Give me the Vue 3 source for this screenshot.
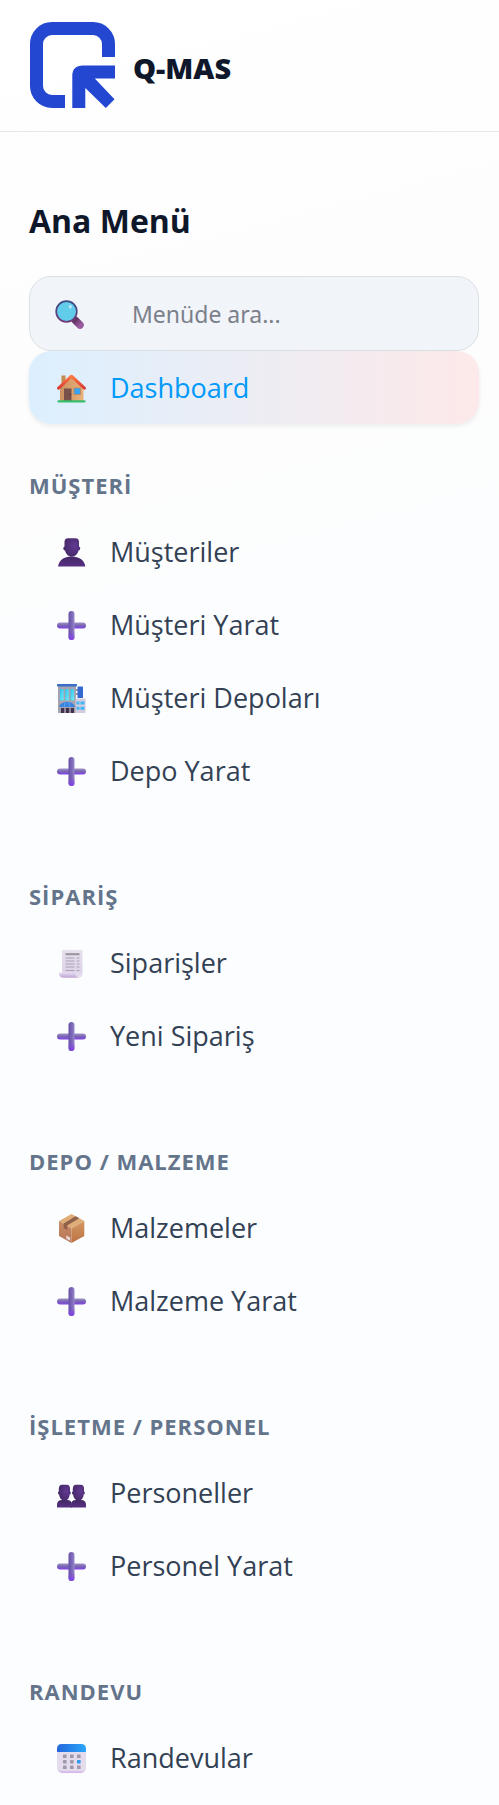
<script setup>
import { ref } from 'vue'

const query = ref('')

const sections = [
  {
    title: 'MÜŞTERİ',
    items: [
      { icon: 'person', label: 'Müşteriler' },
      { icon: 'plus', label: 'Müşteri Yarat' },
      { icon: 'building', label: 'Müşteri Depoları' },
      { icon: 'plus', label: 'Depo Yarat' },
    ],
  },
  {
    title: 'SİPARİŞ',
    items: [
      { icon: 'receipt', label: 'Siparişler' },
      { icon: 'plus', label: 'Yeni Sipariş' },
    ],
  },
  {
    title: 'DEPO / MALZEME',
    items: [
      { icon: 'box', label: 'Malzemeler' },
      { icon: 'plus', label: 'Malzeme Yarat' },
    ],
  },
  {
    title: 'İŞLETME / PERSONEL',
    items: [
      { icon: 'people', label: 'Personeller' },
      { icon: 'plus', label: 'Personel Yarat' },
    ],
  },
  {
    title: 'RANDEVU',
    items: [{ icon: 'calendar', label: 'Randevular' }],
  },
]
</script>

<template>
  <div class="page">
    <svg class="defs" width="0" height="0" aria-hidden="true">
      <defs>
        <linearGradient id="gPlusV" x1="0" y1="0" x2="1" y2="0">
          <stop offset="0" stop-color="#6650a8" />
          <stop offset="0.6" stop-color="#7d6bb8" />
          <stop offset="1" stop-color="#9a88cc" />
        </linearGradient>
        <linearGradient id="gPlusH" x1="0" y1="0" x2="0" y2="1">
          <stop offset="0" stop-color="#a093c4" />
          <stop offset="0.5" stop-color="#7965b4" />
          <stop offset="1" stop-color="#8141e6" />
        </linearGradient>
        <linearGradient id="gPlusEnd" x1="0" y1="0" x2="0" y2="1">
          <stop offset="0.7" stop-color="#8141e6" stop-opacity="0" />
          <stop offset="1" stop-color="#8141e6" />
        </linearGradient>
        <radialGradient id="gHead" cx="0.65" cy="0.4" r="0.7">
          <stop offset="0" stop-color="#623a94" />
          <stop offset="1" stop-color="#432763" />
        </radialGradient>
        <linearGradient id="gBody" x1="0" y1="0" x2="0" y2="1">
          <stop offset="0" stop-color="#432865" />
          <stop offset="1" stop-color="#573083" />
        </linearGradient>
        <linearGradient id="gHandle" x1="0" y1="0" x2="1" y2="1">
          <stop offset="0" stop-color="#653566" />
          <stop offset="1" stop-color="#9a5b9e" />
        </linearGradient>
        <linearGradient id="gRim" x1="0" y1="0" x2="0" y2="1">
          <stop offset="0" stop-color="#3c4a84" />
          <stop offset="1" stop-color="#713b78" />
        </linearGradient>
        <linearGradient id="gWall" x1="0" y1="0" x2="1" y2="0">
          <stop offset="0" stop-color="#c8915f" />
          <stop offset="1" stop-color="#eab27c" />
        </linearGradient>
        <linearGradient id="gRoof" x1="0" y1="0" x2="0" y2="1">
          <stop offset="0" stop-color="#ff7a42" />
          <stop offset="1" stop-color="#d93a36" />
        </linearGradient>
        <linearGradient id="gGlass" x1="0" y1="0" x2="1" y2="1">
          <stop offset="0" stop-color="#35bdea" />
          <stop offset="1" stop-color="#6beefa" />
        </linearGradient>
        <linearGradient id="gPaper" x1="0" y1="0" x2="0" y2="1">
          <stop offset="0" stop-color="#e7e1ec" />
          <stop offset="1" stop-color="#ddd2ea" />
        </linearGradient>
        <linearGradient id="gRoll" x1="0" y1="0" x2="0" y2="1">
          <stop offset="0" stop-color="#e6ddef" />
          <stop offset="1" stop-color="#bfa3d5" />
        </linearGradient>
        <linearGradient id="gBoxL" x1="0" y1="0" x2="0" y2="1">
          <stop offset="0" stop-color="#c78d65" />
          <stop offset="1" stop-color="#b87458" />
        </linearGradient>
        <linearGradient id="gBoxR" x1="0" y1="0" x2="0" y2="1">
          <stop offset="0" stop-color="#d39965" />
          <stop offset="1" stop-color="#bc7142" />
        </linearGradient>
        <linearGradient id="gCalTop" x1="0" y1="0" x2="1" y2="0">
          <stop offset="0" stop-color="#2467dc" />
          <stop offset="1" stop-color="#2ca6fb" />
        </linearGradient>
        <linearGradient id="gCal" x1="0" y1="0" x2="0" y2="1">
          <stop offset="0.9" stop-color="#e4dced" />
          <stop offset="1" stop-color="#cfaeea" />
        </linearGradient>
      </defs>
    </svg>

    <header class="brand">
      <svg class="logo" viewBox="0 0 85 86" aria-hidden="true">
        <path
          d="M78.500 35V22A15.500 15.500 0 0 0 63 6.500H22A15.500 15.500 0 0 0 6.500 22V64A15.500 15.500 0 0 0 22 79.500H35"
          fill="none" stroke="#2347d0" stroke-width="13"
        />
        <path d="M42.300 86V54Q42.300 43.500 53 43.500H85V56.600H64.800L84.500 77.300L75.800 86L55.300 66V86Z" fill="#2347d0" />
      </svg>
      <span class="brand-name">Q-MAS</span>
    </header>

    <nav class="menu" aria-label="Ana Menü">
      <h1 class="title">Ana Menü</h1>

      <label class="search">
        <svg class="icon" viewBox="0 0 29 29" aria-hidden="true">
          <path d="M20.500 20.500L25 25" stroke="url(#gHandle)" stroke-width="7.500" stroke-linecap="round" />
          <circle cx="11.500" cy="11.500" r="10.300" fill="#62cdea" stroke="url(#gRim)" stroke-width="1.700" />
          <ellipse cx="15.300" cy="6.800" rx="1.600" ry="2" fill="#b8e6f7" />
        </svg>
        <input v-model="query" type="text" placeholder="Menüde ara..." aria-label="Menüde ara" />
      </label>

      <a class="item active" href="#" aria-current="page">
        <svg class="icon" viewBox="0 0 29 29" aria-hidden="true">
          <rect x="4.500" y="1.500" width="4" height="11" fill="#c58a52" />
          <path d="M3 13.500L14.500 3L26.500 13.500V27H3Z" fill="url(#gWall)" />
          <path d="M1.600 14.200L14.500 2.200L27.400 14.200" fill="none" stroke="url(#gRoof)" stroke-width="3" stroke-linecap="round" stroke-linejoin="round" />
          <rect x="7" y="14.500" width="7.500" height="12.500" fill="#79504a" />
          <circle cx="13" cy="20.500" r="0.700" fill="#4c2e31" />
          <rect x="17" y="14" width="6.500" height="6.500" fill="#37a4f4" stroke="#bb8658" stroke-width="0.800" />
          <rect x="0.500" y="26.300" width="28" height="2.300" rx="1" fill="#38bd6b" />
        </svg>
        <span>Dashboard</span>
      </a>

      <section v-for="section in sections" :key="section.title" class="group">
        <h2 class="group-title">{{ section.title }}</h2>
        <a v-for="item in section.items" :key="item.label" class="item" href="#">
          <svg class="icon" viewBox="0 0 29 29" aria-hidden="true">
            <template v-if="item.icon === 'plus'">
              <rect x="0" y="11.500" width="29" height="6" rx="3" fill="url(#gPlusH)" />
              <rect x="11.500" y="0" width="6" height="29" rx="3" fill="url(#gPlusV)" />
              <rect x="11.500" y="0" width="6" height="29" rx="3" fill="url(#gPlusEnd)" />
            </template>

            <template v-else-if="item.icon === 'person'">
              <path d="M1 28.500C2 22 7 18.500 14.500 18.500S27.500 22 28.300 28.500Z" fill="url(#gBody)" />
              <path d="M7.500 4Q7.500 0.500 11 0.300H18.500Q22 0.500 22 4V8.500Q23.500 8.800 23.200 10.600Q23 12.500 21.600 12.500Q20 18.500 14.800 18.800Q9.500 18.500 8 12.500Q6.400 12.500 6.300 10.600Q6.200 8.800 7.500 8.500Z" fill="url(#gHead)" />
            </template>

            <template v-else-if="item.icon === 'people'">
              <g v-for="x in [0, 14]" :key="x" :transform="`translate(${x} 5)`">
                <path d="M0 23.500V21Q0 16 5 16H10Q15 16 15 21V23.500Z" fill="url(#gBody)" />
                <path d="M1.800 4.500Q2 1 5 0.800H9.800Q13 1 13 4.500V7.500Q14 7.800 13.800 9.200Q13.500 10.600 12.700 10.600Q12 16.500 7.500 17Q3 16.500 2 10.600Q1.200 10.600 1 9.200Q0.900 7.800 1.800 7.500Z" fill="url(#gHead)" />
              </g>
            </template>

            <template v-else-if="item.icon === 'building'">
              <path d="M18 6H23M18 10H23" stroke="#76717d" stroke-width="1.300" />
              <rect x="1" y="1.500" width="18" height="27.500" fill="#a5a3b0" />
              <rect x="0" y="0" width="20" height="2.400" rx="0.600" fill="#3a6fc9" />
              <rect x="3" y="5" width="3.600" height="11.500" fill="url(#gGlass)" />
              <rect x="8.200" y="5" width="3.600" height="11.500" fill="url(#gGlass)" />
              <rect x="13.500" y="5" width="3.600" height="11.500" fill="url(#gGlass)" />
              <rect x="4" y="24" width="13" height="5" fill="#43324d" />
              <path d="M8 24V29M13 24V29" stroke="#aaa3b1" stroke-width="1.500" />
              <path d="M2 23C3 19.500 6 18 10 18S17 19.500 18 23Z" fill="#3a83e0" />
              <path d="M7 23L8.200 18M13 23L11.800 18" stroke="#58a6f4" stroke-width="1" />
              <rect x="20.500" y="2.500" width="5.500" height="11.500" rx="0.600" fill="#3469cf" />
              <rect x="18.500" y="14.500" width="10" height="14.500" fill="#d3ccdf" />
              <path d="M19.500 19H22.500M23.500 19H27.500M19.500 24.300H22.500M23.500 24.300H27.500" stroke="#3fb8f5" stroke-width="3" />
            </template>

            <template v-else-if="item.icon === 'receipt'">
              <path d="M5 0.500L6.500 1.500L8 0.500L9.500 1.500L11 0.500L12.500 1.500L14 0.500L15.500 1.500L17 0.500L18.500 1.500L20 0.500L21.500 1.500L23 0.500L25.500 1.200V24H5Z" fill="url(#gPaper)" />
              <path d="M8.500 5.200H22.500" stroke="#98929f" stroke-width="2" />
              <path d="M8.500 9H17.500M19.500 9H22.500M8.500 12H17.500M19.500 12H22.500M8.500 15H17.500M19.500 15H22.500M8.500 18H17.500M19.500 18H22.500M8.500 21.500H17.500M19.500 21.500H22.500" stroke="#aaa2b1" stroke-width="1.100" />
              <path d="M2 23.500H20Q18.500 28.700 22 28.700H6Q2 28.500 2 23.500Z" fill="url(#gRoll)" />
              <path d="M18.500 23.500H25.500Q25.500 28.700 21.800 28.700Q18 28.500 18.500 23.500Z" fill="#e4daee" />
            </template>

            <template v-else-if="item.icon === 'box'">
              <path d="M14.500 0L27.300 7L14.500 14.300L2 7Z" fill="#dfae78" />
              <path d="M2 7L14.500 14.300V29L2 22Z" fill="url(#gBoxL)" />
              <path d="M27.300 7L14.500 14.300V29L27.300 22Z" fill="url(#gBoxR)" />
              <path d="M18.500 2.200L22.200 4.200L10.200 11.500V16L6.700 14V9.500Z" fill="#90604b" />
              <path d="M9.300 21.500L13.200 23.500V26.800L9.300 24.700Z" fill="#ead8df" />
            </template>

            <template v-else>
              <rect x="0" y="0" width="29" height="29" rx="5" fill="url(#gCal)" />
              <path d="M0 8V5Q0 0 5 0H24Q29 0 29 5V8Z" fill="url(#gCalTop)" />
              <g v-for="y in [10.500, 16, 21.500]" :key="y">
                <rect
                  v-for="x in [6, 13, 20]" :key="x"
                  :x="x" :y="y" width="3.600" height="3.600" rx="0.500"
                  :fill="x === 20 && y === 16 ? '#3299ef' : '#9e98aa'"
                />
              </g>
            </template>
          </svg>
          <span>{{ item.label }}</span>
        </a>
      </section>
    </nav>
  </div>
</template>

<style>
body {
  margin: 0;
}
</style>

<style scoped>
.page {
  min-height: 100vh;
  box-sizing: border-box;
  background: linear-gradient(165deg, #ffffff 0%, #fdfdfd 20%, #fbfdff 50%, #fbfdff 100%);
  color: #334155;
  font-family: "Open Sans", "Noto Sans", sans-serif;
}

.defs {
  position: absolute;
}

.brand {
  display: flex;
  align-items: center;
  gap: 18px;
  padding: 22px 30px 23px;
  border-bottom: 1px solid #e5e8eb;
}

.logo {
  width: 85px;
  height: 86px;
  flex: none;
}

.brand-name {
  color: #0f172a;
  font-size: 29px;
  font-weight: 800;
  line-height: 36px;
  padding-top: 5px;
}

.menu {
  padding: 67px 20px 10px 29px;
}

.title {
  margin: 0 0 33px;
  color: #0f172a;
  font-size: 32px;
  font-weight: 700;
  line-height: 44px;
}

.search {
  display: flex;
  align-items: center;
  gap: 48px;
  box-sizing: border-box;
  height: 75px;
  padding: 0 25px;
  border: 1px solid #dce1e6;
  border-radius: 22px;
  background: #f1f4f9;
}

.search input {
  flex: 1;
  min-width: 0;
  padding: 0;
  border: 0;
  outline: 0;
  background: transparent;
  color: #334155;
  font-family: "Noto Sans", sans-serif;
  font-size: 23px;
  line-height: 32px;
}

.search input::placeholder {
  color: #7b808b;
  opacity: 1;
}

.icon {
  width: 29px;
  height: 29px;
  flex: none;
  margin-top: 2px;
}

.item {
  display: flex;
  align-items: center;
  gap: 24px;
  height: 73px;
  padding: 0 28px;
  border-radius: 22px;
  color: #334155;
  font-size: 27px;
  line-height: 36px;
  text-decoration: none;
  white-space: nowrap;
}

.item.active {
  color: #0099fa;
  background: linear-gradient(90deg, #dceffe, #ebedf5 45%, #fde9e9);
  box-shadow: 0 2px 4px rgba(15, 23, 42, 0.08);
}

.group {
  margin-top: 74px;
}

.active + .group {
  margin-top: 46px;
}

.group-title {
  margin: 0 0 15px;
  color: #64748b;
  font-size: 22px;
  font-weight: 700;
  line-height: 30px;
  letter-spacing: 1px;
}
</style>
